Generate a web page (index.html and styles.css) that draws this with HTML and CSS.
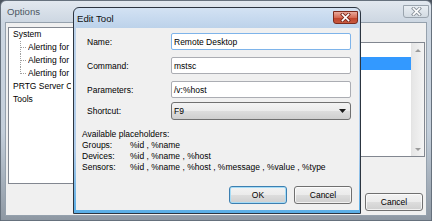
FILE: index.html
```html
<!DOCTYPE html>
<html>
<head>
<meta charset="utf-8">
<title>Edit Tool</title>
<link rel="stylesheet" href="styles.css">
</head>
<body>
<div class="win">
  <div class="win-title">
    <span class="caption caption-inactive">Options</span>
    <span class="xbtn xbtn-inactive"><svg width="11" height="9" viewBox="0 0 11 9"><path d="M2.5 1.5 L8.5 7.5 M8.5 1.5 L2.5 7.5" stroke="#8d959e" stroke-width="3.4" stroke-linecap="square"/><path d="M2.5 1.5 L8.5 7.5 M8.5 1.5 L2.5 7.5" stroke="#ffffff" stroke-width="1.6" stroke-linecap="square"/></svg></span>
  </div>
  <div class="win-body">
    <div class="main">
      <div class="tree">
        <div class="tree-items">
          <div class="node">System</div>
          <div class="children">
            <div class="child"><span class="clip">Alerting for</span></div>
            <div class="child"><span class="clip">Alerting for</span></div>
            <div class="child last"><span class="clip">Alerting for</span></div>
          </div>
          <div class="node"><span class="clip">PRTG Server Core</span></div>
          <div class="node">Tools</div>
        </div>
      </div>
      <div class="right">
        <div class="list">
          <div class="rows">
            <div class="row"></div>
            <div class="row sel"></div>
          </div>
          <div class="sbar">
            <span class="arr arr-up"></span>
            <span class="arr arr-down"></span>
          </div>
        </div>
      </div>
    </div>
    <div class="foot"><button class="btn">Cancel</button></div>
  </div>

  <div class="dialog">
    <div class="dlg-title">
      <span class="caption">Edit Tool</span>
      <span class="xbtn xbtn-red"><svg width="11" height="9" viewBox="0 0 11 9"><path d="M2.5 1.5 L8.5 7.5 M8.5 1.5 L2.5 7.5" stroke="#7a2a1e" stroke-width="3.4" stroke-linecap="square"/><path d="M2.5 1.5 L8.5 7.5 M8.5 1.5 L2.5 7.5" stroke="#ffffff" stroke-width="1.7" stroke-linecap="square"/></svg></span>
    </div>
    <div class="dlg-body">
      <div class="form">
        <div class="frow"><span class="lbl">Name:</span><div class="input input-focus">Remote Desktop</div></div>
        <div class="frow"><span class="lbl">Command:</span><div class="input">mstsc</div></div>
        <div class="frow"><span class="lbl">Parameters:</span><div class="input">/v:%host</div></div>
        <div class="frow frow-combo"><span class="lbl">Shortcut:</span><div class="combo"><span>F9</span><svg width="7" height="4" viewBox="0 0 7 4"><path d="M0 0 H7 L3.5 4 Z" fill="#1a1a1a"/></svg></div></div>
      </div>
      <div class="ph">
        <div class="ph-head">Available placeholders:</div>
        <div class="ph-grid">
          <span>Groups:</span><span>%id , %name</span>
          <span>Devices:</span><span>%id , %name , %host</span>
          <span>Sensors:</span><span>%id , %name , %host , %message , %value , %type</span>
        </div>
      </div>
      <div class="dlg-foot">
        <button class="btn btn-default">OK</button>
        <button class="btn">Cancel</button>
      </div>
    </div>
  </div>
</div>
</body>
</html>
```

FILE: styles.css
```css
* { box-sizing: border-box; margin: 0; padding: 0; }
html, body { width: 432px; height: 221px; overflow: hidden; }
body {
  font-family: "Liberation Sans", Arial, sans-serif;
  font-size: 8.5px;
  color: #000;
  background: #4c5560;
}

.win {
  position: relative;
  width: 432px;
  height: 221px;
  border: 1px solid #66717d;
  border-radius: 6px 6px 0 0;
  background: linear-gradient(#e2e8ef, #cdd7e2 21px, #c3ceda 60%, #8e98a3 100%);
  display: flex;
  flex-direction: column;
}

.win-title {
  height: 21px;
  display: flex;
  justify-content: space-between;
  align-items: flex-start;
  padding: 0 2px 0 6px;
}
.caption { font-size: 9.6px; line-height: 21px; }
.caption-inactive { color: #4b5662; }

.xbtn {
  display: flex;
  align-items: center;
  justify-content: center;
  height: 13px;
  margin-top: 4px;
  border-radius: 0 0 3px 3px;
}
.xbtn-inactive {
  width: 26px;
  border: 1px solid #9aa4ae;
  background: linear-gradient(#e9eef3, #d3dbe3);
}
.xbtn-red {
  width: 25px;
  border: 1px solid #7b2a1c;
  background: linear-gradient(#e9a99b, #d56b55 50%, #c0412a 51%, #c75a3f);
}

.win-body {
  flex: 1;
  margin: 0 4px 4px 4px;
  background: #f0f0f0;
  border: 1px solid #95a1ad;
  padding: 4px 0 0 2px;
  display: flex;
  flex-direction: column;
}

.main { display: flex; height: 157px; gap: 14px; }

.tree {
  width: 190px;
  background: #fff;
  border: 1px solid #828790;
  padding: 0 0 0 4px;
  overflow: hidden;
  white-space: nowrap;
}
.tree-items { width: 58px; }
.clip { display: block; overflow: hidden; white-space: nowrap; }
.node, .child { height: 13px; line-height: 13px; }
.children { margin-left: 7px; }
.child { position: relative; padding-left: 8px; }
.child::before {
  content: "";
  position: absolute;
  left: 0; top: 6px;
  width: 6px;
  border-top: 1px dotted #a0a0a0;
}
.child::after {
  content: "";
  position: absolute;
  left: 0; top: 0;
  height: 13px;
  border-left: 1px dotted #a0a0a0;
}
.child.last::after { height: 7px; }

.right { flex: 1; padding-top: 15px; padding-right: 1px; }
.list {
  height: 115px;
  background: #fff;
  border: 1px solid #828790;
  display: flex;
}
.rows { flex: 1; padding-top: 1px; }
.row { height: 13px; }
.row.sel { background: #3399ff; }
.sbar {
  width: 13px;
  background: linear-gradient(90deg, #e6e6e6, #f4f4f4);
  border-left: 1px solid #e4e4e4;
  display: flex;
  flex-direction: column;
  justify-content: space-between;
  align-items: center;
  padding: 6px 0 5px;
}
.arr { width: 0; height: 0; border-left: 3.5px solid transparent; border-right: 3.5px solid transparent; }
.arr-up { border-bottom: 3px solid #9b9b9b; }
.arr-down { border-top: 3px solid #9b9b9b; }

.foot {
  display: flex;
  justify-content: flex-end;
  padding: 9px 3px 0 0;
}

.btn {
  font-family: inherit;
  font-size: 8.5px;
  color: #000;
  width: 58px;
  height: 18px;
  border: 1px solid #707070;
  border-radius: 3px;
  background: linear-gradient(#f3f3f3, #ebebeb 50%, #dddddd 51%, #cfcfcf);
  box-shadow: inset 0 0 0 1px rgba(255,255,255,0.7);
}
.btn-default {
  border-color: #3c7fb1;
  box-shadow: inset 0 0 0 1px #a6dcf6;
}

.dialog {
  position: absolute;
  left: 72px;
  top: 6px;
  width: 288px;
  height: 207px;
  border: 1px solid #2c3540;
  border-radius: 6px 6px 0 0;
  background: linear-gradient(#d3e2f3, #bcd2ea 20px, #aecbea 70%, #5aaee6 100%);
  display: flex;
  flex-direction: column;
}
.dlg-title {
  height: 20px;
  display: flex;
  justify-content: space-between;
  align-items: flex-start;
  padding: 0 2px 0 3px;
}
.dlg-title .caption { line-height: 21px; color: #111; }
.dlg-title .xbtn { margin-top: 3px; }

.dlg-body {
  flex: 1;
  margin: 0 1px 3px 2px;
  background: #f0f0f0;
  padding: 5px 7px 0 6px;
  display: flex;
  flex-direction: column;
}

.form { margin-left: 5px; display: flex; flex-direction: column; }
.frow { display: flex; align-items: center; height: 17px; margin-top: 7px; }
.frow:first-child { margin-top: 0; }
.frow-combo { height: 18px; margin-top: 4px; }
.lbl { width: 84px; flex: none; }

.input, .combo {
  width: 180px;
  height: 100%;
  display: flex;
  align-items: center;
  padding-left: 2px;
  background: #fff;
  border: 1px solid #abadb3;
  border-radius: 2px;
}
.input-focus { border-color: #7eb4ea; }
.combo {
  justify-content: space-between;
  padding-right: 4px;
  border-color: #707070;
  border-radius: 3px;
  background: linear-gradient(#f3f3f3, #ebebeb 50%, #dddddd 51%, #cfcfcf);
}

.ph { margin-top: 9px; line-height: 11px; }
.ph-grid { display: grid; grid-template-columns: 48px auto; }

.dlg-foot {
  display: flex;
  justify-content: flex-end;
  gap: 7px;
  padding-top: 13px;
}
```
